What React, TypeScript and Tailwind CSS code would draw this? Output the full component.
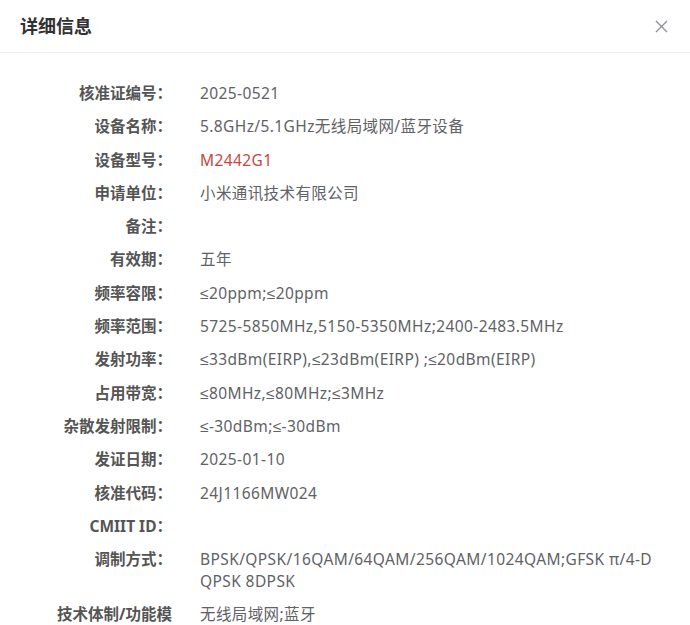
const rows: { label: string; value: string; red?: boolean }[] = [
  { label: '核准证编号：', value: '2025-0521' },
  { label: '设备名称：', value: '5.8GHz/5.1GHz无线局域网/蓝牙设备' },
  { label: '设备型号：', value: 'M2442G1', red: true },
  { label: '申请单位：', value: '小米通讯技术有限公司' },
  { label: '备注：', value: '' },
  { label: '有效期：', value: '五年' },
  { label: '频率容限：', value: '≤20ppm;≤20ppm' },
  { label: '频率范围：', value: '5725-5850MHz,5150-5350MHz;2400-2483.5MHz' },
  { label: '发射功率：', value: '≤33dBm(EIRP),≤23dBm(EIRP) ;≤20dBm(EIRP)' },
  { label: '占用带宽：', value: '≤80MHz,≤80MHz;≤3MHz' },
  { label: '杂散发射限制：', value: '≤-30dBm;≤-30dBm' },
  { label: '发证日期：', value: '2025-01-10' },
  { label: '核准代码：', value: '24J1166MW024' },
  { label: 'CMIIT ID：', value: '' },
  // the source breaks this one mid-word
  { label: '调制方式：', value: 'BPSK/QPSK/16QAM/64QAM/256QAM/1024QAM;GFSK π/4-D\nQPSK 8DPSK' },
  { label: '技术体制/功能模式：', value: '无线局域网;蓝牙' },
]

export default function App() {
  return (
    <div
      className="h-[625px] w-[690px] overflow-hidden bg-white"
      style={{ fontFamily: '"Noto Sans", "Liberation Sans", "Noto Sans CJK SC", sans-serif' }}
    >
      <div className="flex h-[53px] items-center justify-between border-b border-[#ebeef5] pl-[20px] pr-[22px]">
        <h2 className="text-[18px] font-bold text-[#303133]">详细信息</h2>
        <svg width="13" height="13" viewBox="0 0 13 13" className="text-[#909399]">
          <path d="M1 1L12 12M12 1L1 12" stroke="currentColor" strokeWidth="1.4" />
        </svg>
      </div>
      <div className="flex flex-col gap-[11.3px] pt-[29px] text-[15.5px] leading-[22px] tracking-[0.4px]">
        {rows.map((r) => (
          <div key={r.label} className="flex">
            <div className="w-[172px] shrink-0 pl-[50px] text-right font-bold tracking-normal text-[#555]">{r.label}</div>
            <div className={`w-[490px] whitespace-pre-line break-all pl-[28px] ${r.red ? 'text-[#c9463d]' : 'text-[#606266]'}`}>{r.value}</div>
          </div>
        ))}
      </div>
    </div>
  )
}
